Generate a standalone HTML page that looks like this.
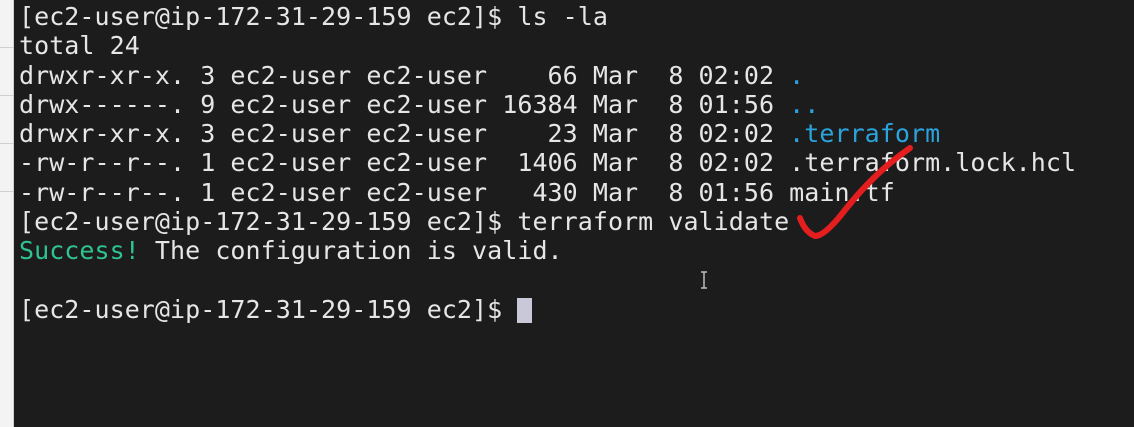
<!DOCTYPE html>
<html><head><style>
html,body{margin:0;padding:0;width:1134px;height:427px;overflow:hidden;background:#1c1c1c}
.side{position:absolute;left:0;top:0;width:13px;height:427px;background:#f3f3f3;border-right:1px solid #cfcfcf}
.side i{position:absolute;left:0;width:13px;height:1px;background:#d0d0d0}
pre{position:absolute;left:19px;top:2px;margin:0;font-family:"DejaVu Sans Mono","Liberation Mono",monospace;font-size:25px;line-height:29.3px;color:#e6e6e6;letter-spacing:0.05px}
.b{color:#2ba3dc}.g{color:#2fc48f}
.cur{display:inline-block;width:15px;height:25px;background:#c8c8d8;vertical-align:-5px}
</style></head><body>
<div class="side"><i style="top:47px"></i><i style="top:95px"></i><i style="top:143px"></i><i style="top:191px"></i></div>
<pre>[ec2-user@ip-172-31-29-159 ec2]$ ls -la
total 24
drwxr-xr-x. 3 ec2-user ec2-user    66 Mar  8 02:02 <span class="b">.</span>
drwx------. 9 ec2-user ec2-user 16384 Mar  8 01:56 <span class="b">..</span>
drwxr-xr-x. 3 ec2-user ec2-user    23 Mar  8 02:02 <span class="b">.terraform</span>
-rw-r--r--. 1 ec2-user ec2-user  1406 Mar  8 02:02 .terraform.lock.hcl
-rw-r--r--. 1 ec2-user ec2-user   430 Mar  8 01:56 main.tf
[ec2-user@ip-172-31-29-159 ec2]$ terraform validate
<span class="g">Success!</span> The configuration is valid.

[ec2-user@ip-172-31-29-159 ec2]$ <span class="cur"></span></pre>
<svg style="position:absolute;left:0;top:0" width="1134" height="427"><path d="M800 218 Q805 232 815 236 Q825 236 845 210 Q875 172 910 148" stroke="#e41e1e" stroke-width="6" fill="none" stroke-linecap="round"/>
<path d="M704 272 v16 M701 272 h6 M701 288 h6" stroke="#bbb" stroke-width="1.5"/></svg>
</body></html>
